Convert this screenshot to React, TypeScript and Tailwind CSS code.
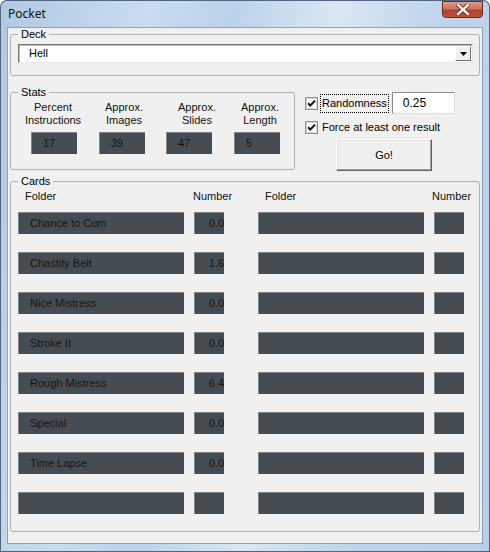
import React from 'react';

const leftCards: [string, string][] = [
  ['Chance to Cum', '0.0'],
  ['Chastity Belt', '1.6'],
  ['Nice Mistress', '0.0'],
  ['Stroke It', '0.0'],
  ['Rough Mistress', '6.4'],
  ['Special', '0.0'],
  ['Time Lapse', '0.0'],
  ['', ''],
];

const DarkBox: React.FC<{ text?: string; className?: string }> = ({ text, className }) => (
  <div
    className={
      'h-[22px] shrink-0 overflow-hidden whitespace-nowrap bg-[#454d52] border-t border-l border-[#7f8589] text-[11px] leading-[21px] text-[#161616] ' +
      (className ?? '')
    }
  >
    {text}
  </div>
);

const CheckBox = () => (
  <svg width="13" height="13" viewBox="0 0 13 13" className="shrink-0">
    <rect x="0.5" y="0.5" width="12" height="12" fill="#f4f4f4" stroke="#8e8f8f" />
    <rect x="1.5" y="1.5" width="10" height="10" fill="#fbfbfb" stroke="#d8d8d8" />
    <polyline points="3,6.2 5.3,8.6 10,3.6" fill="none" stroke="#111" strokeWidth="2" />
  </svg>
);

export default function App() {
  return (
    <div className="w-[490px] h-[552px] flex flex-col rounded-t-[7px] bg-[linear-gradient(100deg,#b0c8e2_0%,#c9dcf0_25%,#bcd2ea_40%,#d9e7f5_58%,#c0d5eb_75%,#b8cfe7_100%)] shadow-[inset_0_0_0_1px_#52677f] font-['Liberation_Sans',Arial,sans-serif] text-[11px] text-black">
      {/* title bar */}
      <div className="h-[27px] flex items-start justify-between shrink-0">
        <div className="pl-[8px] pt-[6px] text-[12px] leading-[16px] font-['Noto_Sans',sans-serif] text-[#111]">Pocket</div>
        <div className="mr-[7px] mt-[1px] w-[41px] h-[17px] rounded-b-[4px] border border-[#6b2a22] bg-[linear-gradient(180deg,#dc9a8c_0%,#cc7462_45%,#b4402c_55%,#c0503a_100%)] flex items-center justify-center">
          <svg width="14" height="11" viewBox="0 0 14 11">
            <path d="M2 1 L12 10 M12 1 L2 10" stroke="#6a2a20" strokeWidth="4" strokeLinecap="square" />
            <path d="M2 1 L12 10 M12 1 L2 10" stroke="#f4eeee" strokeWidth="2.4" strokeLinecap="square" />
          </svg>
        </div>
      </div>

      {/* client */}
      <div className="mx-[7px] h-[517px] shrink-0 border border-[#8da2ba] bg-[#f0f0f0] flex flex-col">
        {/* Deck */}
        <fieldset className="ml-[2px] w-[470px] h-[48px] border border-[#b0b0b0] rounded-[3px]">
          <legend className="ml-[7px] px-[3px] leading-[13px]">Deck</legend>
          <div className="mt-[3px] ml-[7px] w-[455px] h-[19px] flex items-center bg-white border border-t-[#7a7a7a] border-l-[#7a7a7a] border-b-[#e8e8e8] border-r-[#e8e8e8] shadow-[inset_1px_1px_0_#b9b9b9]">
            <div className="flex-1 pl-[10px] leading-[15px]">Hell</div>
            <div className="mr-[1px] w-[16px] h-[15px] flex items-center justify-center bg-[#f0f0f0] border border-t-[#fdfdfd] border-l-[#fdfdfd] border-b-[#707070] border-r-[#707070]">
              <svg width="7" height="4" viewBox="0 0 7 4">
                <path d="M0 0 L7 0 L3.5 4 Z" fill="#000" />
              </svg>
            </div>
          </div>
        </fieldset>

        <div className="mt-[10px] flex">
          {/* Stats */}
          <fieldset className="ml-[2px] w-[285px] h-[84px] border border-[#b0b0b0] rounded-[3px] shrink-0">
            <legend className="ml-[7px] px-[3px] leading-[13px]">Stats</legend>
            <div className="mt-[2px] flex leading-[13px] text-center text-[#111]">
              <div className="ml-[12px] w-[60px]">Percent<br />Instructions</div>
              <div className="ml-[11px] w-[60px]">Approx.<br />Images</div>
              <div className="ml-[13px] w-[60px]">Approx.<br />Slides</div>
              <div className="ml-[3px] w-[60px]">Approx.<br />Length</div>
            </div>
            <div className="mt-[5px] flex">
              <DarkBox text="17" className="ml-[20px] w-[46px] pl-[11px]" />
              <DarkBox text="39" className="ml-[22px] w-[46px] pl-[11px]" />
              <DarkBox text="47" className="ml-[21px] w-[46px] pl-[11px]" />
              <DarkBox text="5" className="ml-[22px] w-[46px] pl-[11px]" />
            </div>
          </fieldset>

          {/* options */}
          <div className="ml-[10px] mt-[6px] flex flex-col">
            <div className="h-[22px] flex items-center">
              <CheckBox />
              <div className="ml-[2px] h-[19px] px-[1px] flex items-center border border-dotted border-black">Randomness</div>
              <div className="ml-[3px] w-[63px] h-[22px] pl-[10px] flex items-center bg-white border border-t-[#8a8a8a] border-l-[#8a8a8a] border-b-[#dcdcdc] border-r-[#dcdcdc] text-[12px]">0.25</div>
            </div>
            <div className="mt-[7px] h-[13px] flex items-center">
              <CheckBox />
              <div className="ml-[4px] whitespace-nowrap">Force at least one result</div>
            </div>
            <div className="mt-[5px] ml-[31px] w-[96px] h-[32px] flex items-center justify-center bg-[#f0f0f0] border border-t-[#ffffff] border-l-[#ffffff] border-b-[#646464] border-r-[#646464] shadow-[inset_-1px_-1px_0_#a0a0a0,inset_1px_1px_0_#e3e3e3]">
              Go!
            </div>
          </div>
        </div>

        {/* Cards */}
        <fieldset className="mt-[4px] ml-[2px] w-[470px] h-[357px] border border-[#b0b0b0] rounded-[3px]">
          <legend className="ml-[7px] px-[3px] leading-[13px]">Cards</legend>
          <div className="mt-[2px] flex leading-[13px] text-[#111] whitespace-nowrap">
            <div className="ml-[14px] w-[168px]">Folder</div>
            <div className="w-[72px]">Number</div>
            <div className="w-[167px]">Folder</div>
            <div>Number</div>
          </div>
          <div className="mt-[9px] ml-[7px] flex flex-col gap-[18px]">
            {leftCards.map(([name, num], i) => (
              <div key={i} className="flex">
                <DarkBox text={name} className="w-[166px] pl-[11px]" />
                <DarkBox text={num} className="ml-[10px] w-[30px] text-right pr-0" />
                <DarkBox className="ml-[34px] w-[166px]" />
                <DarkBox className="ml-[10px] w-[30px]" />
              </div>
            ))}
          </div>
        </fieldset>
      </div>
    </div>
  );
}
